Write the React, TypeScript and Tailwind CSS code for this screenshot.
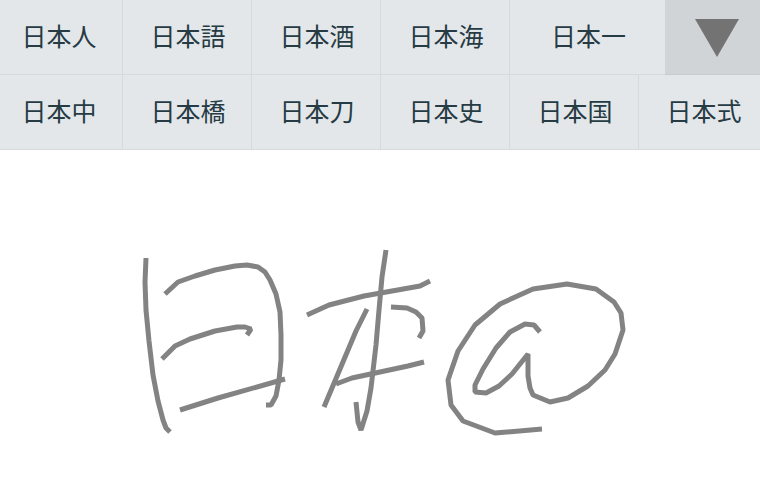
const firstRow = ["日本人", "日本語", "日本酒", "日本海"];
const secondRow = ["日本中", "日本橋", "日本刀", "日本史", "日本国", "日本式"];

const strokes = [
  "146,258 145,282 146,310 149,341 153,375 158,401 163,420 166,428 170,432",
  "165,294 178,282 195,276 215,270 235,266 247,265 258,267 265,272 270,280 276,294 280,312 281,335 281,360 279,380 276,396 271,405 266,405",
  "162,359 175,346 190,339 215,331 237,327 245,327 251,329 247,335",
  "180,410 218,398 285,379",
  "386,250 382,277 379,310 376,345 371,388 367,411 361,430 358,422 356,402",
  "307,315 329,305 364,296 420,286 430,281",
  "367,309 356,331 340,369 324,407",
  "391,307 407,308 416,312 422,318 423,331 419,338",
  "336,384 352,378 408,366 424,362",
  "540,332 534,325 525,324 510,332 496,348 483,369 475,385 475,392 486,393 499,386 512,374 528,354 528,376 530,388 533,395 550,402 568,398 588,386 605,370 615,354 623,330 621,313 614,302 596,289 567,284 533,289 500,304 475,325 458,351 448,380 451,405 463,421 495,433 542,429",
];

function Candidate({ text, className }: { text: string; className: string }) {
  return (
    <button
      type="button"
      className={`h-[75px] border-b border-l border-[#d5dadd] pb-1 pl-0.5 text-center text-[25px] leading-9 text-[#263b44] ${className}`}
    >
      {text}
    </button>
  );
}

export default function App() {
  return (
    <main
      lang="ja"
      className="min-h-screen overflow-hidden bg-white font-['Noto_Sans_CJK_JP',sans-serif]"
    >
      <section aria-label="変換候補" className="-mx-[7px] bg-[#e3e7ea]">
        <div className="flex">
          {firstRow.map((text) => (
            <Candidate key={text} text={text} className="w-1/6" />
          ))}
          <Candidate text="日本一" className="flex-1" />
          <button
            type="button"
            aria-label="候補を閉じる"
            className="flex h-[75px] w-[102px] items-center justify-center border-b border-[#c8cccf] bg-[#d0d4d7] pt-0.5 pl-px"
          >
            <svg viewBox="0 0 44 38" className="h-[38px] w-11" aria-hidden="true">
              <path d="M0 0H44L22 38Z" fill="#737373" />
            </svg>
          </button>
        </div>
        <div className="flex">
          {secondRow.map((text) => (
            <Candidate key={text} text={text} className="w-1/6" />
          ))}
        </div>
      </section>
      <svg
        viewBox="0 150 760 334"
        className="block w-full"
        role="img"
        aria-label="手書き入力"
        fill="none"
        stroke="#838383"
        strokeWidth="5"
        strokeLinejoin="bevel"
      >
        {strokes.map((points) => (
          <polyline key={points} points={points} />
        ))}
      </svg>
    </main>
  );
}
